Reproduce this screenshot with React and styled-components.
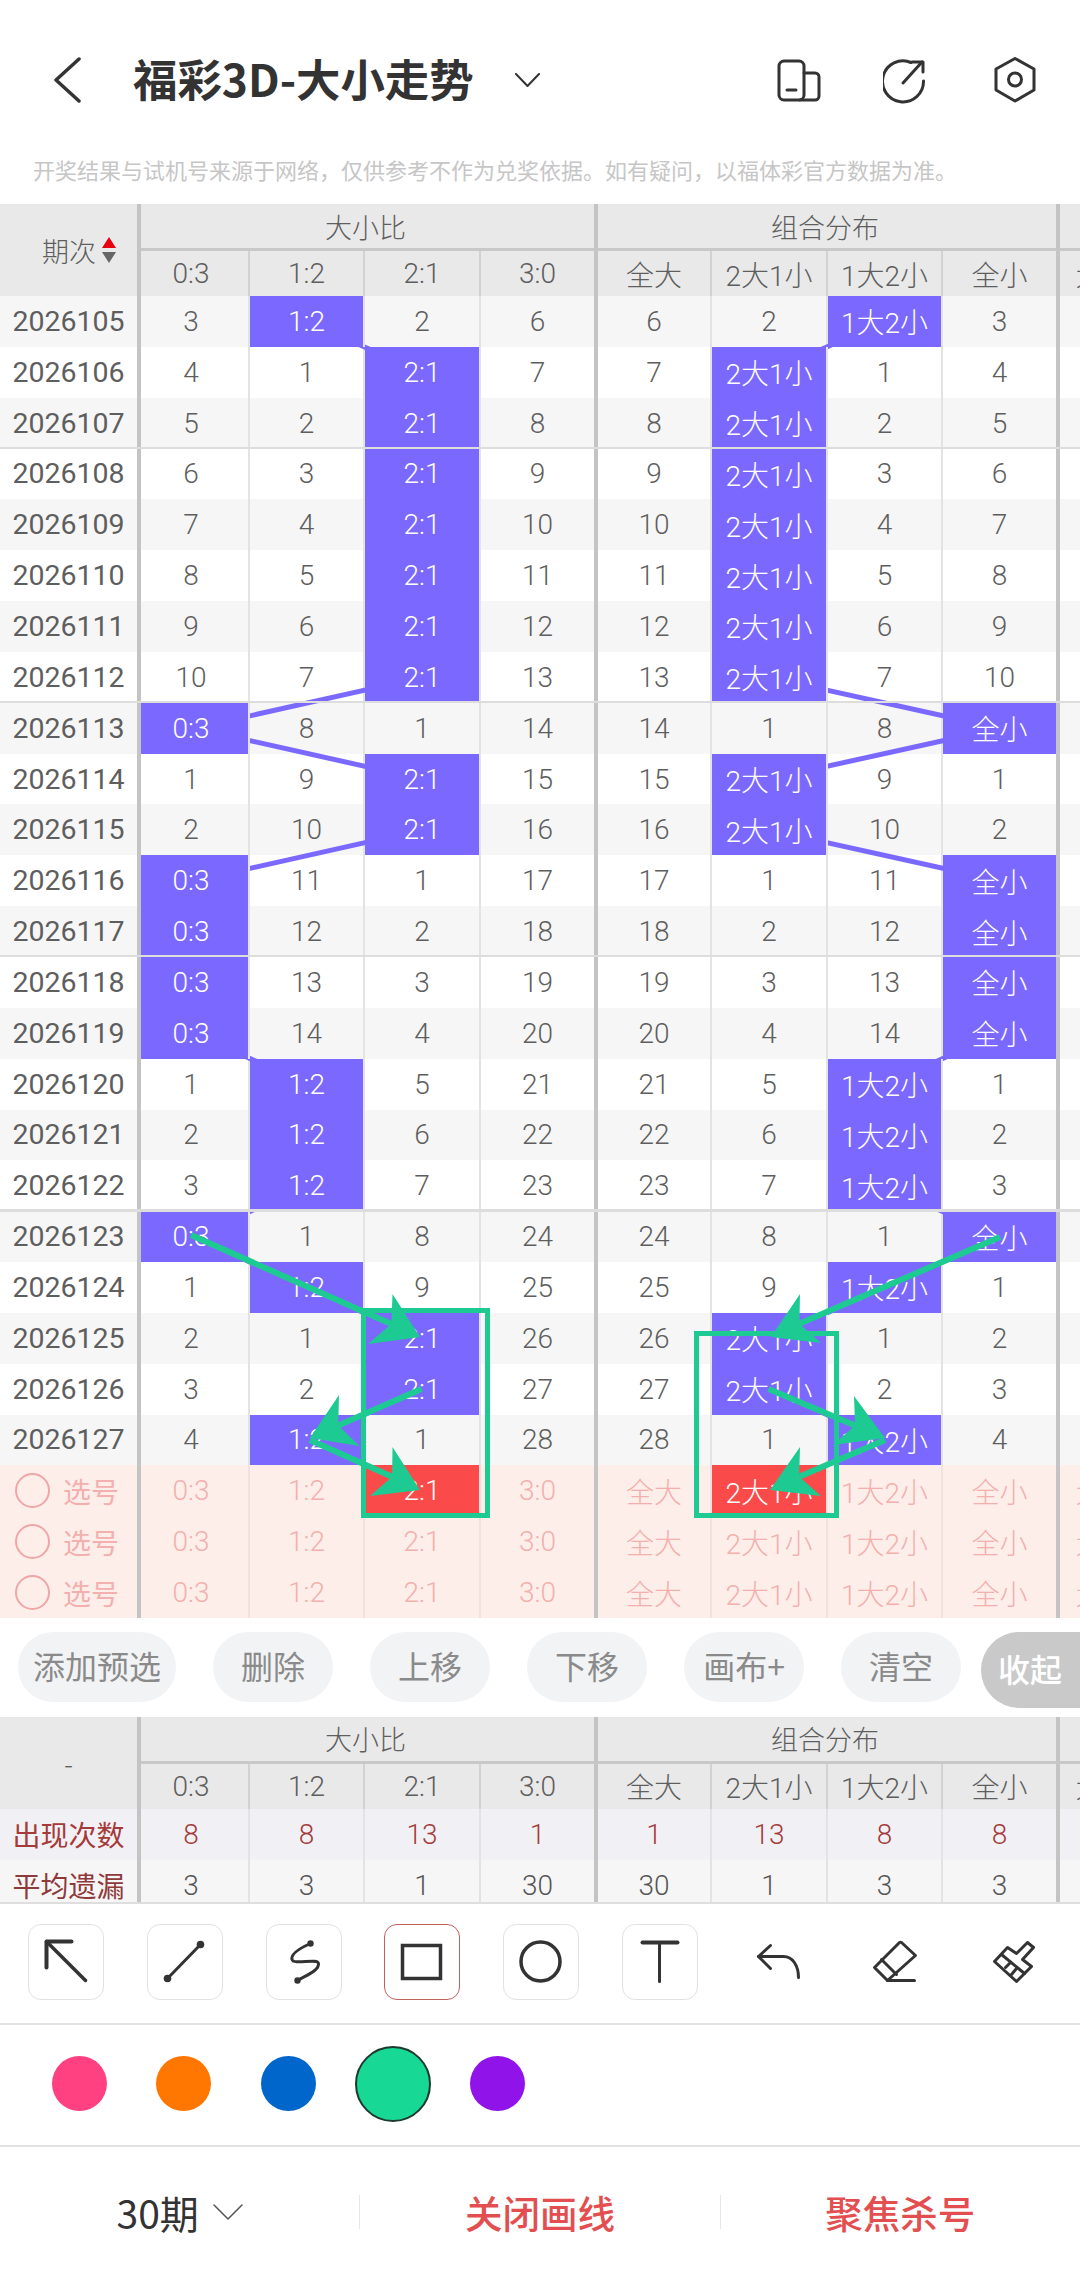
import React from "react";
import styled, { createGlobalStyle } from "styled-components";

const GlobalStyle = createGlobalStyle`
  html, body {
    margin: 0;
    padding: 0;
    background: #fff;
  }
  * {
    box-sizing: border-box;
  }
`;

const COLUMNS = "141px 109px 115px 116px 117px 114px 116px 115px 117px 115px";
const ROW_H = 50.85;
const BODY_TOP = 296;

const Page = styled.div`
  position: relative;
  width: 1080px;
  height: 2279px;
  overflow: hidden;
  font-family: Roboto, "Noto Sans CJK SC", sans-serif;
  color: #5e5e5e;
  background: #fff;
`;
const TopBar = styled.div`
  display: flex;
  align-items: center;
  height: 147px;
  padding: 13px 41px 0 54px;
`;
const Title = styled.div`
  margin-left: 52px;
  margin-right: 41px;
  padding-bottom: 6px;
  font-size: 44.4px;
  font-weight: 700;
  color: #333;
  white-space: nowrap;
  font-family: "Noto Sans CJK SC", sans-serif;
`;
const TopIcons = styled.div`
  display: flex;
  gap: 60px;
  margin-left: auto;
`;
const Notice = styled.div`
  height: 44px;
  margin-bottom: 13px;
  padding-left: 33px;
  font-family: "Noto Sans CJK SC", sans-serif;
  font-size: 22px;
  line-height: 44px;
  color: #c6c6c6;
  white-space: nowrap;
`;
const TableWrap = styled.div`
  position: relative;
  width: 1080px;
  overflow: hidden;
`;
const HeaderGrid = styled.div`
  display: grid;
  grid-template-columns: ${COLUMNS};
  grid-template-rows: 47px 45px;
  background: #e9e9e9;
  font-weight: 300;
`;
const Corner = styled.div`
  grid-row: 1 / 3;
  grid-column: 1;
  display: flex;
  align-items: center;
  justify-content: ${(p) => (p.$center ? "center" : "flex-start")};
  gap: 6px;
  padding-left: ${(p) => (p.$center ? "0" : "42px")};
  border-right: 4px solid #c4c4c4;
  background: #e9e9e9;
  font-family: "Noto Sans CJK SC", sans-serif;
  font-size: 27px;
`;
const SortMark = styled.div`
  display: flex;
  flex-direction: column;
  gap: 4px;
`;
const Triangle = styled.span`
  display: block;
  width: 0;
  height: 0;
  border-left: 7px solid transparent;
  border-right: 7px solid transparent;
  ${(p) => (p.$up ? "border-bottom: 11px solid #e8000f;" : "border-top: 11px solid #666;")}
`;
const GroupHead = styled.div`
  grid-column: span ${(p) => p.$span};
  display: flex;
  align-items: center;
  justify-content: center;
  padding-right: 4px;
  border-bottom: 3px solid #c8c8c8;
  border-right: ${(p) => (p.$open ? "0" : "4px solid #c4c4c4")};
  font-family: "Noto Sans CJK SC", sans-serif;
  font-size: 27px;
`;
const SubHead = styled.div`
  display: flex;
  align-items: center;
  justify-content: center;
  min-width: 0;
  overflow: hidden;
  white-space: nowrap;
  font-size: 28px;
  padding-right: ${(p) => (p.$first ? "7px" : "0")};
  border-right: ${(p) =>
    p.$end ? "4px solid #c4c4c4" : p.$open ? "0" : "2px solid #d2d2d2"};
`;
const Body = styled.div`
  position: relative;
`;
const Row = styled.div`
  position: relative;
  display: grid;
  grid-template-columns: ${COLUMNS};
  height: ${ROW_H}px;
  font-weight: 300;
  background: ${(p) => (p.$bg ? p.$bg : p.$pick ? "#fdeee9" : p.$alt ? "#f6f6f6" : "#fff")};
  color: ${(p) => (p.$pick ? "#f3b0ae" : "#5e5e5e")};
  ${(p) =>
    p.$rule &&
    `&::before {
      content: "";
      position: absolute;
      left: 0;
      right: 0;
      top: -2px;
      height: 2.5px;
      background: #dddddd;
      z-index: 3;
    }`}
`;
const RowLabel = styled.div`
  display: flex;
  align-items: center;
  justify-content: center;
  gap: 13px;
  border-right: 4px solid #c4c4c4;
  white-space: nowrap;
  font-weight: 400;
  font-size: ${(p) => (p.$cjk ? "28px" : "28.5px")};
  color: ${(p) => p.$color || "inherit"};
  font-family: ${(p) => (p.$cjk ? '"Noto Sans CJK SC", sans-serif' : "inherit")};
`;
const Radio = styled.span`
  width: 35px;
  height: 35px;
  margin-left: -3px;
  border: 2px solid #f0a6a6;
  border-radius: 50%;
`;
const Cell = styled.div`
  position: ${(p) => (p.$hit ? "relative" : "static")};
  z-index: ${(p) => (p.$hit ? 2 : "auto")};
  display: flex;
  align-items: center;
  justify-content: center;
  min-width: 0;
  overflow: hidden;
  white-space: nowrap;
  font-size: 28px;
  padding-right: ${(p) => (p.$first ? "7px" : "0")};
  background: ${(p) =>
    p.$hit === "red" ? "#fb4a4a" : p.$hit ? "#7b69ff" : "transparent"};
  color: ${(p) => (p.$hit ? "#fff" : p.$color || "inherit")};
  border-right: ${(p) =>
    p.$end ? "4px solid #c4c4c4" : p.$open ? "0" : `2px solid ${p.$pick ? "#f2e2de" : "#e3e3e3"}`};
`;
const Overlay = styled.svg`
  position: absolute;
  top: 0;
  left: 0;
  z-index: ${(p) => p.$z};
  pointer-events: none;
`;
const ButtonRow = styled.div`
  display: flex;
  align-items: flex-start;
  gap: 37px;
  height: 99px;
  padding: 14px 0 0 18px;
  overflow: hidden;
`;
const PillButton = styled.div`
  flex-shrink: 0;
  display: flex;
  align-items: center;
  justify-content: center;
  min-width: 120px;
  height: 70px;
  padding: 0 15px 3px;
  border-radius: 35px;
  background: #f2f3f5;
  color: #8a8a8a;
  font-family: "Noto Sans CJK SC", sans-serif;
  font-size: 32px;
`;
const CollapseButton = styled.div`
  flex-shrink: 0;
  display: flex;
  align-items: center;
  width: 100px;
  height: 76px;
  margin-left: -17px;
  padding: 0 0 3px 17px;
  border-radius: 38px 0 0 38px;
  background: #c9c9c9;
  color: #fff;
  font-family: "Noto Sans CJK SC", sans-serif;
  font-size: 32px;
  font-weight: 500;
`;
const SummaryWrap = styled.div`
  height: 187px;
  overflow: hidden;
  border-bottom: 2px solid #dedede;
`;
const Toolbar = styled.div`
  display: flex;
  align-items: center;
  gap: 42.75px;
  height: 121px;
  padding: 0 0 2px 28px;
  border-bottom: 2px solid #e2e2e2;
`;
const Tool = styled.div`
  flex-shrink: 0;
  width: 76px;
  height: 76px;
  border-radius: 13px;
  border: 1.5px solid ${(p) => (p.$plain ? "transparent" : p.$active ? "#c0605c" : "#e2e2e2")};
`;
const Swatches = styled.div`
  display: grid;
  grid-template-columns: repeat(5, 104.5px);
  align-items: center;
  justify-items: center;
  height: 122px;
  padding: 0 0 2px 27px;
  border-bottom: 2px solid #e2e2e2;
`;
const Swatch = styled.div`
  width: ${(p) => (p.$active ? "76px" : "55px")};
  height: ${(p) => (p.$active ? "76px" : "55px")};
  border-radius: 50%;
  background: ${(p) => p.$color};
  border: ${(p) => (p.$active ? "2px solid #1c3a30" : "0")};
`;
const BottomBar = styled.div`
  display: flex;
  align-items: center;
  height: 132px;
  padding-bottom: 2px;
`;
const BottomItem = styled.div`
  flex: 1;
  display: flex;
  align-items: center;
  justify-content: center;
  gap: 14px;
  height: 34px;
  border-left: ${(p) => (p.$first ? "0" : "1.5px solid #e8e8e8")};
  font-family: "Noto Sans CJK SC", sans-serif;
  font-size: ${(p) => (p.$first ? "39px" : "37.5px")};
  font-weight: ${(p) => (p.$first ? 400 : 500)};
  color: ${(p) => (p.$first ? "#333" : "#e34f50")};
  white-space: nowrap;
`;

const RATIOS = ["0:3", "1:2", "2:1", "3:0"];
const COMBOS = ["全大", "2大1小", "1大2小", "全小"];
const CX = [194.5, 306.5, 422, 537.5, 654.5, 769, 885, 999.5];

// index into RATIOS per issue, 2026105 to 2026127
const HITS = [1, 2, 2, 2, 2, 2, 2, 2, 0, 2, 2, 0, 0, 0, 0, 1, 1, 1, 0, 1, 2, 2, 1];
const START_MISS = [2, 0, 1, 5];

const buildRows = () => {
  const miss = [...START_MISS];
  return HITS.map((hit) => {
    const values = miss.map((m, i) => {
      if (i === hit) {
        miss[i] = 0;
        return null;
      }
      miss[i] = m + 1;
      return m + 1;
    });
    return values;
  });
};

const rowY = (i) => BODY_TOP + (i + 0.5) * ROW_H;

const connectors = HITS.slice(1).flatMap((hit, i) => {
  const prev = HITS[i];
  if (prev === hit) return [];
  return [
    { x1: CX[prev], y1: rowY(i), x2: CX[hit], y2: rowY(i + 1) },
    { x1: CX[7 - prev], y1: rowY(i), x2: CX[7 - hit], y2: rowY(i + 1) },
  ];
});

const ARROWS = [
  { from: [191, 1235], tip: [420, 1337], a: [392.5, 1294], b: [368, 1344] },
  { from: [421.5, 1389], tip: [310, 1438], a: [339, 1395], b: [359.5, 1446] },
  { from: [310, 1440], tip: [420, 1490], a: [392.5, 1447], b: [370, 1496] },
  { from: [1000, 1237], tip: [771, 1337], a: [800, 1294], b: [821, 1343] },
  { from: [768.6, 1389], tip: [885, 1438], a: [854, 1396], b: [833, 1445] },
  { from: [885, 1440], tip: [770, 1490], a: [800, 1447], b: [821, 1496] },
];

const GREEN = "#1dcb92";

const Arrow = ({ from, tip, a, b }) => {
  const nx = tip[0] + ((a[0] + b[0]) / 2 - tip[0]) * 0.72;
  const ny = tip[1] + ((a[1] + b[1]) / 2 - tip[1]) * 0.72;
  return (
    <g>
      <line x1={from[0]} y1={from[1]} x2={nx} y2={ny} stroke={GREEN} strokeWidth="6" />
      <polygon points={`${tip} ${a} ${nx},${ny} ${b}`} fill={GREEN} />
    </g>
  );
};

const TableHead = ({ corner }) => (
  <HeaderGrid>
    {corner}
    <GroupHead $span={4}>大小比</GroupHead>
    <GroupHead $span={4}>组合分布</GroupHead>
    <GroupHead $span={1} $open />
    {RATIOS.map((t, i) => (
      <SubHead key={t} $first={i === 0} $end={i === 3}>
        {t}
      </SubHead>
    ))}
    {COMBOS.map((t, i) => (
      <SubHead key={t} $end={i === 3}>
        {t}
      </SubHead>
    ))}
    <SubHead $open>大大大</SubHead>
  </HeaderGrid>
);

const stroke = { fill: "none", stroke: "#333", strokeLinecap: "round", strokeLinejoin: "round" };

const BackIcon = () => (
  <svg width="27" height="46" viewBox="0 0 27 46">
    <polyline points="25,2 2,23 25,44" {...stroke} strokeWidth="3.5" />
  </svg>
);
const Chevron = ({ w, h, sw, color }) => (
  <svg width={w} height={h} viewBox={`0 0 ${w} ${h}`}>
    <polyline points={`1,1 ${w / 2},${h - 1} ${w - 1},1`} {...stroke} stroke={color} strokeWidth={sw} />
  </svg>
);
const DeviceIcon = () => (
  <svg width="48" height="48" viewBox="0 0 48 48">
    <g {...stroke} strokeWidth="3">
      <rect x="4" y="5" width="25" height="39" rx="5" />
      <path d="M29 17 H40 a4 4 0 0 1 4 4 V40 a4 4 0 0 1 -4 4 H25" />
      <path d="M12 34 H21" />
    </g>
  </svg>
);
const ShareIcon = () => (
  <svg width="48" height="48" viewBox="4 0 48 48">
    <g {...stroke} strokeWidth="3">
      <path d="M32 6.5 A20.5 20.5 0 1 0 44.5 25" />
      <path d="M24 27 L43 6" />
      <path d="M33 6 H44 V16" />
    </g>
  </svg>
);
const HexIcon = () => (
  <svg width="48" height="48" viewBox="0 0 48 48">
    <g {...stroke} strokeWidth="3">
      <polygon points="24,2.5 43,13 43,34 24,45 5,34 5,13" />
      <circle cx="24" cy="23.5" r="6.5" />
    </g>
  </svg>
);

const TOOL_ICONS = [
  <g key="arrow" {...stroke}>
    <path d="M19 18 L58 57" strokeWidth="3.5" />
    <path d="M44 18 H19 V44" strokeWidth="4" />
  </g>,
  <g key="line" {...stroke}>
    <path d="M54 21 L21 55" strokeWidth="3" />
    <circle cx="54" cy="21" r="3.8" fill="#333" stroke="none" />
    <circle cx="21" cy="55" r="3.8" fill="#333" stroke="none" />
  </g>,
  <g key="curve" {...stroke}>
    <path d="M45 20 C36 24 25 30 26.5 36 C28 42 52 34 53 40 C54 47 40 52 32 57" strokeWidth="3" />
    <circle cx="45" cy="20" r="3.2" fill="#333" stroke="none" />
    <circle cx="32" cy="57" r="3.2" fill="#333" stroke="none" />
  </g>,
  <g key="rect" {...stroke}>
    <rect x="19" y="22" width="38" height="33" strokeWidth="3.5" strokeLinecap="butt" strokeLinejoin="miter" />
  </g>,
  <circle key="circle" cx="38" cy="38" r="19.5" {...stroke} strokeWidth="3.5" />,
  <g key="text" {...stroke}>
    <path d="M21 19 H56" strokeWidth="4" />
    <path d="M38 19 V58" strokeWidth="3" />
  </g>,
  <g key="undo" {...stroke} strokeWidth="3">
    <path d="M30 22 L18 33 L30 45" />
    <path d="M18 33 H43 C52 33 58 42 58 54" />
  </g>,
  <g key="eraser" {...stroke} strokeWidth="3">
    <path d="M41 19 a2 2 0 0 1 2 0 L57 32 L29 57 L16 44 Z" />
    <path d="M23 36 L38 51" />
    <path d="M29 57 H56" />
  </g>,
  <g key="brush" {...stroke} strokeWidth="3">
    <path d="M30 24 L39 30 L50 19 L56 24 L45 36 L54 43 L39 58 L17 38 Z" />
    <path d="M24 31 L47 50" />
    <path d="M28 44 L33 39 M34 51 L39 45" />
  </g>,
];

const SWATCHES = ["#ff4081", "#ff7700", "#0066cc", "#18d895", "#9013ea"];

export default function App() {
  const rows = buildRows();
  const bodyHeight = ROW_H * 26;
  return (
    <Page>
      <GlobalStyle />
      <TopBar>
        <BackIcon />
        <Title>福彩3D-大小走势</Title>
        <Chevron w={25} h={14} sw={2} color="#333" />
        <TopIcons>
          <DeviceIcon />
          <ShareIcon />
          <HexIcon />
        </TopIcons>
      </TopBar>
      <Notice>开奖结果与试机号来源于网络，仅供参考不作为兑奖依据。如有疑问，以福体彩官方数据为准。</Notice>

      <TableWrap>
        <TableHead
          corner={
            <Corner>
              期次
              <SortMark>
                <Triangle $up />
                <Triangle />
              </SortMark>
            </Corner>
          }
        />
        <Body>
          <Overlay $z={1} width="1080" height={bodyHeight} viewBox={`0 ${BODY_TOP} 1080 ${bodyHeight}`}>
            {connectors.map((l, i) => (
              <line key={i} {...l} stroke="#7b69ff" strokeWidth="5" />
            ))}
          </Overlay>
          {rows.map((values, r) => {
            const ordered = [...values, ...[...values].reverse()];
            const labels = [...RATIOS, ...COMBOS];
            return (
              <Row key={r} $alt={r % 2 === 0} $rule={r > 0 && (r + 2) % 5 === 0}>
                <RowLabel>{2026105 + r}</RowLabel>
                {ordered.map((v, c) => (
                  <Cell key={c} $hit={v === null} $first={c === 0} $end={c === 3 || c === 7}>
                    {v === null ? labels[c] : v}
                  </Cell>
                ))}
                <Cell $open />
              </Row>
            );
          })}
          {[0, 1, 2].map((r) => (
            <Row key={r} $pick>
              <RowLabel $cjk>
                <Radio />
                选号
              </RowLabel>
              {[...RATIOS, ...COMBOS].map((t, c) => (
                <Cell
                  key={t}
                  $pick
                  $hit={r === 0 && (c === 2 || c === 5) ? "red" : false}
                  $first={c === 0}
                  $end={c === 3 || c === 7}
                >
                  {t}
                </Cell>
              ))}
              <Cell $open>大大大</Cell>
            </Row>
          ))}
          <Overlay $z={5} width="1080" height={bodyHeight} viewBox={`0 ${BODY_TOP} 1080 ${bodyHeight}`}>
            <rect x="363.5" y="1310.5" width="124" height="205" fill="none" stroke={GREEN} strokeWidth="5" />
            <rect x="696.5" y="1333.5" width="140" height="182" fill="none" stroke={GREEN} strokeWidth="5" />
            {ARROWS.map((a, i) => (
              <Arrow key={i} {...a} />
            ))}
          </Overlay>
        </Body>
      </TableWrap>

      <ButtonRow>
        <PillButton>添加预选</PillButton>
        <PillButton>删除</PillButton>
        <PillButton>上移</PillButton>
        <PillButton>下移</PillButton>
        <PillButton>画布+</PillButton>
        <PillButton>清空</PillButton>
        <CollapseButton>收起</CollapseButton>
      </ButtonRow>

      <SummaryWrap>
        <TableHead corner={<Corner $center>-</Corner>} />
        <Row $bg="#f1f1f5">
          <RowLabel $cjk $color="#a53a3a">
            出现次数
          </RowLabel>
          {[8, 8, 13, 1, 1, 13, 8, 8].map((v, c) => (
            <Cell key={c} $first={c === 0} $end={c === 3 || c === 7} $color="#a53a3a">
              {v}
            </Cell>
          ))}
          <Cell $open />
        </Row>
        <Row $alt>
          <RowLabel $cjk $color="#8f3a3a">
            平均遗漏
          </RowLabel>
          {[3, 3, 1, 30, 30, 1, 3, 3].map((v, c) => (
            <Cell key={c} $first={c === 0} $end={c === 3 || c === 7} $color="#555">
              {v}
            </Cell>
          ))}
          <Cell $open />
        </Row>
      </SummaryWrap>

      <Toolbar>
        {TOOL_ICONS.map((icon, i) => (
          <Tool key={i} $active={i === 3} $plain={i > 5}>
            <svg width="73" height="73" viewBox="1.5 1.5 73 73">
              {icon}
            </svg>
          </Tool>
        ))}
      </Toolbar>

      <Swatches>
        {SWATCHES.map((c, i) => (
          <Swatch key={c} $color={c} $active={i === 3} />
        ))}
      </Swatches>

      <BottomBar>
        <BottomItem $first>
          30期
          <Chevron w={30} h={16} sw={1.5} color="#555" />
        </BottomItem>
        <BottomItem>关闭画线</BottomItem>
        <BottomItem>聚焦杀号</BottomItem>
      </BottomBar>
    </Page>
  );
}
